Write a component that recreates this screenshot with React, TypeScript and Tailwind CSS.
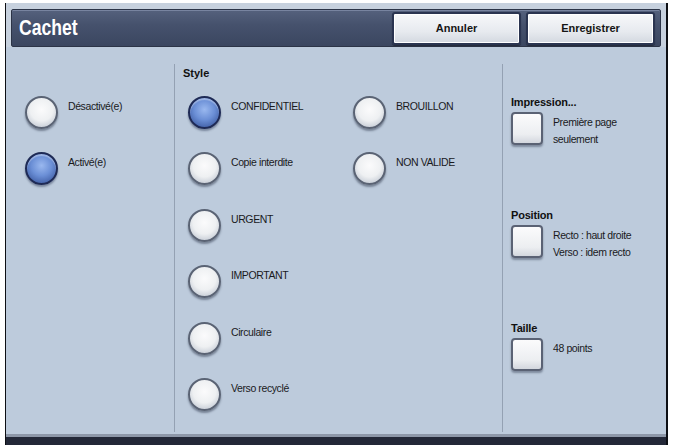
import React from "react";

type Option = { label: string; selected?: boolean };

const styleLeft: Option[] = [
  { label: "CONFIDENTIEL", selected: true },
  { label: "Copie interdite" },
  { label: "URGENT" },
  { label: "IMPORTANT" },
  { label: "Circulaire" },
  { label: "Verso recyclé" },
];

const styleRight: Option[] = [{ label: "BROUILLON" }, { label: "NON VALIDE" }];

function Radio({ selected }: { selected?: boolean }) {
  return selected ? (
    <div className="w-[33px] h-[33px] shrink-0 rounded-full border-[2px] border-[#1e2a55] bg-[radial-gradient(circle_at_50%_40%,#9ab8ef_0%,#6b8fd6_45%,#4463aa_80%,#2e4585_100%)] shadow-[0_2px_2px_rgba(40,50,80,0.45),inset_0_2px_1px_rgba(255,255,255,0.35)]" />
  ) : (
    <div className="w-[33px] h-[33px] shrink-0 rounded-full border-[2px] border-[#5a6374] bg-[radial-gradient(circle_at_50%_40%,#fbfbfc_0%,#eef0f2_50%,#c9cfd8_80%,#98a0af_100%)] shadow-[0_2px_2px_rgba(50,60,80,0.5)]" />
  );
}

function RadioRow({ label, selected }: Option) {
  return (
    <div className="flex items-start gap-[10px]">
      <Radio selected={selected} />
      <span className="pt-[3px] text-[10.5px] leading-[14px] tracking-[-0.4px] text-[#1a1a1c]">{label}</span>
    </div>
  );
}

function SquareButton() {
  return (
    <div className="w-[32px] h-[33px] shrink-0 rounded-[4px] border-[2px] border-[#5a6274] bg-[linear-gradient(#fbfbfc,#eceef1_70%,#d3d7de)] shadow-[0_2px_2px_rgba(50,60,80,0.45)]" />
  );
}

function Setting({ title, lines }: { title: string; lines: string[] }) {
  return (
    <div className="flex flex-col">
      <span className="text-[11px] leading-[14px] font-bold tracking-[-0.2px] text-[#111]">{title}</span>
      <div className="mt-[3px] h-[33px] flex items-start gap-[10px]">
        <SquareButton />
        <div className="pt-[1.5px] flex flex-col text-[10.5px] leading-[17px] tracking-[-0.4px] text-[#1a1a1c]">
          {lines.map((l) => (
            <span key={l}>{l}</span>
          ))}
        </div>
      </div>
    </div>
  );
}

function HeaderButton({ label }: { label: string }) {
  return (
    <button className="w-[129px] h-[33px] rounded-[3px] border-[2px] border-[#2a3450] bg-[linear-gradient(#f7f8fa,#e7eaef_60%,#d3d8e0)] shadow-[inset_0_0_0_1px_#ffffff,0_1px_1px_rgba(0,0,0,0.4)] text-[11px] font-bold text-[#151515]">
      {label}
    </button>
  );
}

export default function App() {
  return (
    <div className="w-[673px] h-[445px] bg-white pt-[3px] pl-[5px] pr-[5px] font-['Liberation_Sans',Arial,sans-serif]">
      <div className="h-full flex flex-col border-l border-r-2 border-[#0d0f14] bg-[#c7d1de]">
        {/* Header */}
        <div className="mx-[5px] mt-[6px] h-[38px] flex items-center justify-between rounded-[2px] border border-[#2c3447] bg-[linear-gradient(#55617d,#46526d_40%,#3b4660)] shadow-[inset_0_1px_0_#7884a0] pl-[7px] pr-[5px]">
          <span className="origin-left scale-x-[0.8] text-[22px] font-bold text-white leading-none">Cachet</span>
          <div className="flex gap-[5px]">
            <HeaderButton label="Annuler" />
            <HeaderButton label="Enregistrer" />
          </div>
        </div>

        {/* Body */}
        <div className="flex-1 flex bg-[#bdcbdc] pt-[17px] pb-[5px] border-b-[8px] border-[#232838] shadow-[inset_0_-3px_0_#8d97a8]">
          {/* Left column */}
          <div className="w-[168px] pt-[31.5px] pl-[19px] flex flex-col gap-[23.5px]">
            <RadioRow label="Désactivé(e)" />
            <RadioRow label="Activé(e)" selected />
          </div>

          <div className="w-px bg-[#94a1b3]" />

          {/* Style column */}
          <div className="w-[327px] pl-[8px] pt-[2px] flex flex-col">
            <span className="text-[11px] leading-[14px] font-bold text-[#111]">Style</span>
            <div className="mt-[15.5px] pl-[5px] flex">
              <div className="w-[165px] flex flex-col gap-[23.5px]">
                {styleLeft.map((o) => (
                  <RadioRow key={o.label} {...o} />
                ))}
              </div>
              <div className="flex flex-col gap-[23.5px]">
                {styleRight.map((o) => (
                  <RadioRow key={o.label} {...o} />
                ))}
              </div>
            </div>
          </div>

          <div className="w-px bg-[#94a1b3]" />

          {/* Right column */}
          <div className="flex-1 pl-[8px] pt-[31px] flex flex-col gap-[63px]">
            <Setting title="Impression..." lines={["Première page", "seulement"]} />
            <Setting title="Position" lines={["Recto : haut droite", "Verso : idem recto"]} />
            <Setting title="Taille" lines={["48 points"]} />
          </div>
        </div>
      </div>
    </div>
  );
}
